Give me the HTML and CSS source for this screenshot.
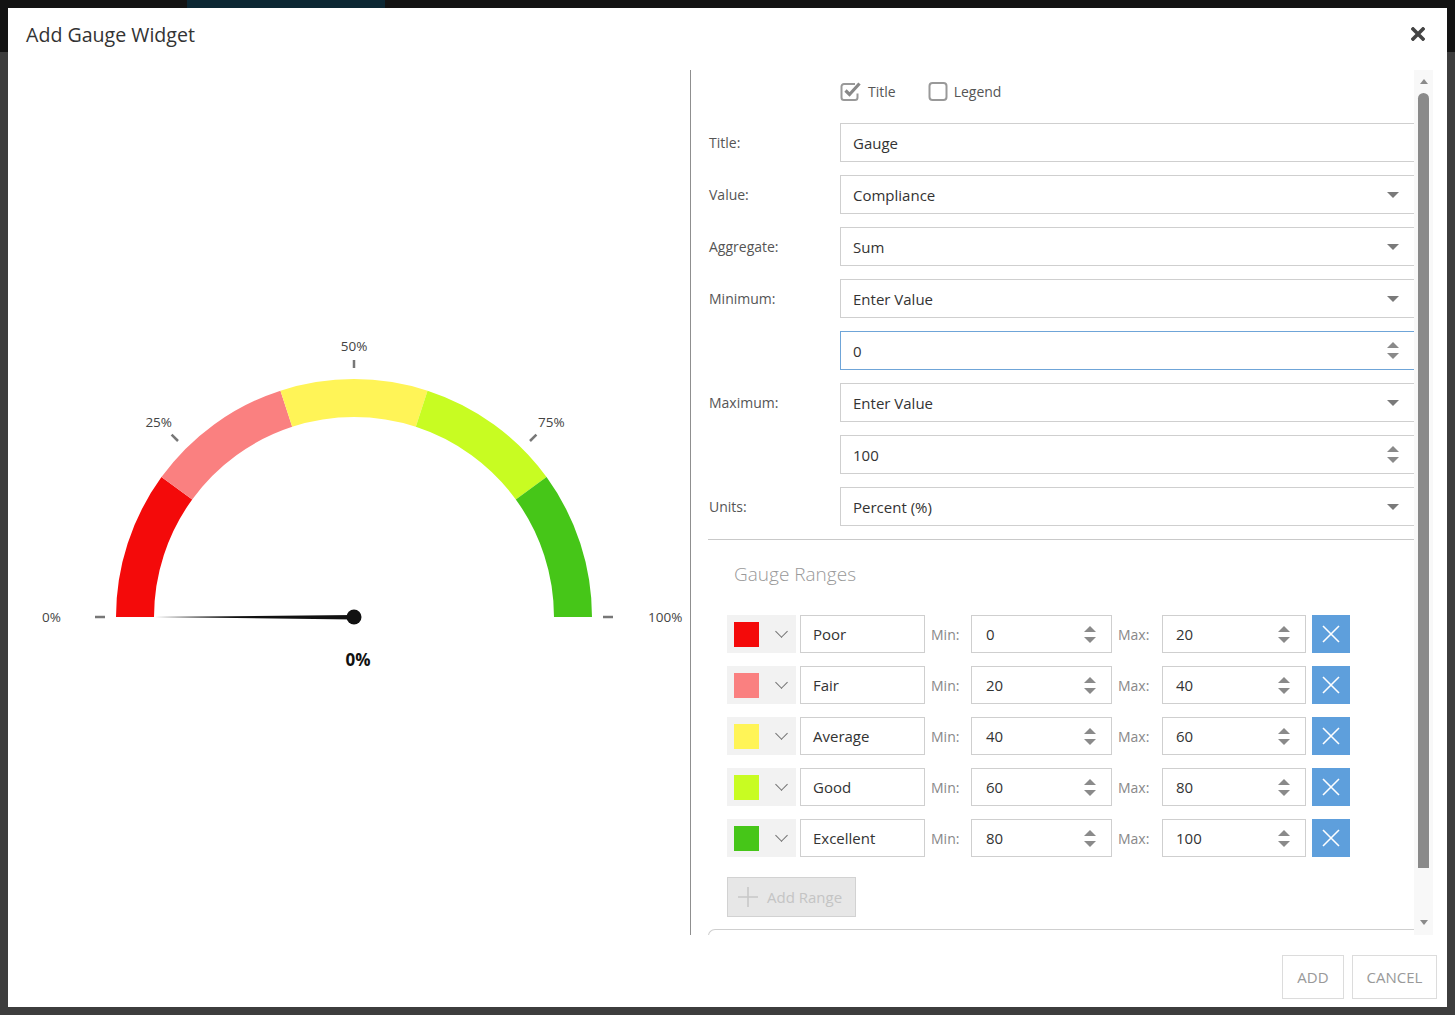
FILE: index.html
```html
<!DOCTYPE html>
<html lang="en">
<head>
  <meta charset="UTF-8" />
  <title>Add Gauge Widget</title>
  <link rel="stylesheet" href="styles.css">
</head>
<body>

  <!-- Ventana modal -->
  <div class="modal">
    <div class="modal-header">
      <h2 class="modal-title">Add Gauge Widget</h2>
      <button class="close-btn" aria-label="Close">
        <svg width="14" height="14" viewBox="0 0 14 14"><path d="M2 2 L12 12 M12 2 L2 12" stroke="#444" stroke-width="3.6" stroke-linecap="square"/></svg>
      </button>
    </div>

    <div class="modal-body">
      <!-- Vista previa del gauge -->
      <div class="preview">
        <svg class="gauge" width="682" height="865" viewBox="8 70 682 865">
          <path d="M116 617 A238 238 0 0 1 161.45 477.11 L192.2 499.44 A200 200 0 0 0 154 617 Z" fill="#f40a0a"/>
          <path d="M161.45 477.11 A238 238 0 0 1 280.45 390.64 L292.2 426.78 A200 200 0 0 0 192.2 499.44 Z" fill="#fa8080"/>
          <path d="M280.45 390.64 A238 238 0 0 1 427.55 390.64 L415.8 426.78 A200 200 0 0 0 292.2 426.78 Z" fill="#fff457"/>
          <path d="M427.55 390.64 A238 238 0 0 1 546.55 477.11 L515.8 499.44 A200 200 0 0 0 415.8 426.78 Z" fill="#c8fc22"/>
          <path d="M546.55 477.11 A238 238 0 0 1 592 617 L554 617 A200 200 0 0 0 515.8 499.44 Z" fill="#46c618"/>

          <g stroke="#777" stroke-width="2.5">
            <line x1="95" y1="617" x2="105" y2="617"/>
            <line x1="171.6" y1="434.6" x2="178" y2="441"/>
            <line x1="354" y1="360" x2="354" y2="368"/>
            <line x1="536.4" y1="434.6" x2="530" y2="441"/>
            <line x1="603" y1="617" x2="613" y2="617"/>
          </g>

          <g class="tick-label">
            <text x="61" y="622" text-anchor="end">0%</text>
            <text x="172" y="427" text-anchor="end">25%</text>
            <text x="354" y="351" text-anchor="middle">50%</text>
            <text x="538" y="427" text-anchor="start">75%</text>
            <text x="648" y="622" text-anchor="start">100%</text>
          </g>

          <polygon points="155,617 354,615 354,619.5" fill="#111"/>
          <circle cx="354" cy="617" r="7.5" fill="#111"/>
          <text class="gauge-value" x="358" y="666" text-anchor="middle">0%</text>
        </svg>
      </div>

      <!-- Configuración -->
      <div class="settings">
        <div class="settings-scroll">
          <div class="checks">
            <label class="check">
              <svg width="22" height="20" viewBox="0 0 22 20"><path d="M15 3 H4 a2.5 2.5 0 0 0 -2.5 2.5 v11 a2.5 2.5 0 0 0 2.5 2.5 h11 a2.5 2.5 0 0 0 2.5 -2.5 v-4" fill="none" stroke="#999" stroke-width="2"/><path d="M5.5 9.5 L9.5 13.5 L19.5 2.5" fill="none" stroke="#888" stroke-width="3.2"/></svg>
              Title
            </label>
            <label class="check">
              <svg width="20" height="20" viewBox="0 0 20 20"><rect x="1.5" y="2" width="17" height="17" rx="3" fill="none" stroke="#999" stroke-width="2"/></svg>
              Legend
            </label>
          </div>

          <div class="form-row">
            <span class="form-label">Title:</span>
            <div class="field">Gauge</div>
          </div>
          <div class="form-row">
            <span class="form-label">Value:</span>
            <div class="field">Compliance<span class="caret"></span></div>
          </div>
          <div class="form-row">
            <span class="form-label">Aggregate:</span>
            <div class="field">Sum<span class="caret"></span></div>
          </div>
          <div class="form-row">
            <span class="form-label">Minimum:</span>
            <div class="field">Enter Value<span class="caret"></span></div>
          </div>
          <div class="form-row">
            <span class="form-label"></span>
            <div class="field focused">0<span class="spin"><i class="up"></i><i class="down"></i></span></div>
          </div>
          <div class="form-row">
            <span class="form-label">Maximum:</span>
            <div class="field">Enter Value<span class="caret"></span></div>
          </div>
          <div class="form-row">
            <span class="form-label"></span>
            <div class="field">100<span class="spin"><i class="up"></i><i class="down"></i></span></div>
          </div>
          <div class="form-row">
            <span class="form-label">Units:</span>
            <div class="field">Percent (%)<span class="caret"></span></div>
          </div>

          <hr class="sep">
          <h3 class="ranges-title">Gauge Ranges</h3>

          <div class="range-row">
            <div class="color-pick"><span class="swatch" style="background:#f40a0a"></span><span class="chev"></span></div>
            <div class="rfield name">Poor</div>
            <span class="rlabel">Min:</span>
            <div class="rfield num-min">0<span class="spin"><i class="up"></i><i class="down"></i></span></div>
            <span class="rlabel max">Max:</span>
            <div class="rfield num-max">20<span class="spin"><i class="up"></i><i class="down"></i></span></div>
            <button class="del-btn"><svg width="18" height="18" viewBox="0 0 18 18"><path d="M1 1 L17 17 M17 1 L1 17" stroke="#fff" stroke-width="1.6"/></svg></button>
          </div>
          <div class="range-row">
            <div class="color-pick"><span class="swatch" style="background:#fa8080"></span><span class="chev"></span></div>
            <div class="rfield name">Fair</div>
            <span class="rlabel">Min:</span>
            <div class="rfield num-min">20<span class="spin"><i class="up"></i><i class="down"></i></span></div>
            <span class="rlabel max">Max:</span>
            <div class="rfield num-max">40<span class="spin"><i class="up"></i><i class="down"></i></span></div>
            <button class="del-btn"><svg width="18" height="18" viewBox="0 0 18 18"><path d="M1 1 L17 17 M17 1 L1 17" stroke="#fff" stroke-width="1.6"/></svg></button>
          </div>
          <div class="range-row">
            <div class="color-pick"><span class="swatch" style="background:#fff457"></span><span class="chev"></span></div>
            <div class="rfield name">Average</div>
            <span class="rlabel">Min:</span>
            <div class="rfield num-min">40<span class="spin"><i class="up"></i><i class="down"></i></span></div>
            <span class="rlabel max">Max:</span>
            <div class="rfield num-max">60<span class="spin"><i class="up"></i><i class="down"></i></span></div>
            <button class="del-btn"><svg width="18" height="18" viewBox="0 0 18 18"><path d="M1 1 L17 17 M17 1 L1 17" stroke="#fff" stroke-width="1.6"/></svg></button>
          </div>
          <div class="range-row">
            <div class="color-pick"><span class="swatch" style="background:#c8fc22"></span><span class="chev"></span></div>
            <div class="rfield name">Good</div>
            <span class="rlabel">Min:</span>
            <div class="rfield num-min">60<span class="spin"><i class="up"></i><i class="down"></i></span></div>
            <span class="rlabel max">Max:</span>
            <div class="rfield num-max">80<span class="spin"><i class="up"></i><i class="down"></i></span></div>
            <button class="del-btn"><svg width="18" height="18" viewBox="0 0 18 18"><path d="M1 1 L17 17 M17 1 L1 17" stroke="#fff" stroke-width="1.6"/></svg></button>
          </div>
          <div class="range-row">
            <div class="color-pick"><span class="swatch" style="background:#46c618"></span><span class="chev"></span></div>
            <div class="rfield name">Excellent</div>
            <span class="rlabel">Min:</span>
            <div class="rfield num-min">80<span class="spin"><i class="up"></i><i class="down"></i></span></div>
            <span class="rlabel max">Max:</span>
            <div class="rfield num-max">100<span class="spin"><i class="up"></i><i class="down"></i></span></div>
            <button class="del-btn"><svg width="18" height="18" viewBox="0 0 18 18"><path d="M1 1 L17 17 M17 1 L1 17" stroke="#fff" stroke-width="1.6"/></svg></button>
          </div>

          <button class="add-range" disabled>
            <svg width="22" height="22" viewBox="0 0 22 22"><path d="M11 1 V21 M1 11 H21" stroke="#c8c8c8" stroke-width="1.6"/></svg>
            Add Range
          </button>

          <div class="next-box"></div>
        </div>

        <!-- Barra de desplazamiento -->
        <div class="scrollbar">
          <span class="sb-up"></span>
          <span class="sb-thumb"></span>
          <span class="sb-down"></span>
        </div>
      </div>
    </div>

    <div class="modal-footer">
      <button class="foot-btn add">ADD</button>
      <button class="foot-btn cancel">CANCEL</button>
    </div>
  </div>

</body>
</html>
```

FILE: styles.css
```css
body {
  margin: 0;
  padding: 8px;
  background:
    linear-gradient(to right, transparent 187px, #0c2733 187px, #0c2733 385px, transparent 385px) top left / 100% 8px no-repeat,
    linear-gradient(#131313 0, #131313 52px, #3d3d3d 52px);
  font-family: "Open Sans", "Liberation Sans", sans-serif;
  color: #333;
}

.modal {
  width: 1439px;
  height: 999px;
  background: #fff;
  display: flex;
  flex-direction: column;
}

.modal-header {
  height: 52px;
  padding: 0 22px 0 18px;
  display: flex;
  align-items: center;
  justify-content: space-between;
}

.modal-title {
  margin: 0;
  font-size: 19.6px;
  font-weight: 400;
  color: #333;
}

.close-btn {
  background: none;
  border: none;
  padding: 0;
  width: 14px;
  height: 14px;
  display: flex;
  cursor: pointer;
}

.modal-body {
  margin-top: 10px;
  height: 865px;
  display: flex;
}

.preview {
  width: 683px;
  flex-shrink: 0;
  border-right: 1px solid #8f8f8f;
  box-sizing: border-box;
}

.gauge {
  display: block;
}

.tick-label text {
  font-size: 13.5px;
  fill: #444;
}

.gauge-value {
  font-size: 17px;
  font-weight: 700;
  fill: #111;
}

.settings {
  flex: 1;
  display: flex;
  padding: 0 14px 0 17px;
}

.settings-scroll {
  width: 706px;
  overflow: hidden;
  padding-top: 7px;
  box-sizing: border-box;
}

/* Casillas */
.checks {
  height: 28px;
  margin: 0 0 18px 132px;
  display: flex;
  align-items: center;
  font-size: 14px;
  color: #555;
}

.check {
  display: flex;
  align-items: center;
  gap: 6px;
  margin-right: 32px;
}

.check svg {
  display: block;
}

/* Filas del formulario */
.form-row {
  display: flex;
  align-items: center;
  margin-bottom: 13px;
}

.form-label {
  width: 132px;
  flex-shrink: 0;
  font-size: 14px;
  color: #555;
  padding-left: 1px;
  box-sizing: border-box;
}

.field {
  flex: 1;
  height: 39px;
  box-sizing: border-box;
  border: 1px solid #cfcfcf;
  border-right: none;
  padding: 0 15px 0 12px;
  display: flex;
  align-items: center;
  justify-content: space-between;
  font-size: 15px;
  color: #333;
}

.field.focused {
  border-color: #6fa5d8;
}

.caret {
  width: 0;
  height: 0;
  border-left: 6px solid transparent;
  border-right: 6px solid transparent;
  border-top: 6px solid #7a7a7a;
}

.spin {
  display: flex;
  flex-direction: column;
  gap: 5px;
}

.spin i {
  display: block;
  width: 0;
  height: 0;
  border-left: 6px solid transparent;
  border-right: 6px solid transparent;
}

.spin .up {
  border-bottom: 6px solid #8a8a8a;
}

.spin .down {
  border-top: 6px solid #8a8a8a;
}

.sep {
  margin: 0;
  border: none;
  border-top: 1px solid #c9c9c9;
}

.ranges-title {
  margin: 21px 0 28px 26px;
  font-size: 19px;
  line-height: 26px;
  font-weight: 300;
  color: #999;
}

/* Rangos */
.range-row {
  display: flex;
  align-items: center;
  height: 38px;
  margin: 0 0 13px 19px;
}

.color-pick {
  width: 69px;
  height: 38px;
  background: #f2f2f2;
  display: flex;
  align-items: center;
  padding-left: 7px;
  box-sizing: border-box;
}

.swatch {
  width: 25px;
  height: 25px;
}

.chev {
  width: 8px;
  height: 8px;
  border-right: 1.3px solid #707070;
  border-bottom: 1.3px solid #707070;
  transform: rotate(45deg);
  margin: -6px 0 0 18px;
}

.rfield {
  height: 38px;
  border: 1px solid #cfcfcf;
  box-sizing: border-box;
  display: flex;
  align-items: center;
  justify-content: space-between;
  font-size: 15px;
  color: #333;
}

.rfield.name {
  width: 125px;
  margin-left: 4px;
  padding-left: 12px;
}

.rfield.num-min {
  width: 141px;
  padding: 0 15px 0 14px;
}

.rfield.num-max {
  width: 144px;
  padding: 0 15px 0 13px;
}

.rlabel {
  width: 46px;
  padding-left: 6px;
  box-sizing: border-box;
  font-size: 14px;
  color: #888;
}

.rlabel.max {
  width: 50px;
}

.del-btn {
  width: 38px;
  height: 38px;
  margin-left: 6px;
  border: none;
  background: #5e9fdc;
  display: flex;
  align-items: center;
  justify-content: center;
  padding: 0;
  cursor: pointer;
}

.add-range {
  margin: 20px 0 0 19px;
  width: 129px;
  height: 40px;
  background: #e7e7e7;
  border: 1px solid #d2d2d2;
  display: flex;
  align-items: center;
  gap: 8px;
  padding: 0 0 0 9px;
  font-family: inherit;
  font-size: 15px;
  color: #c4c4c4;
}

.next-box {
  margin-top: 12px;
  height: 60px;
  border: 1px solid #cfcfcf;
  border-right: none;
  border-radius: 7px 0 0 0;
}

/* Barra de desplazamiento */
.scrollbar {
  width: 19px;
  background: #f8f8f8;
  display: flex;
  flex-direction: column;
  align-items: center;
}

.sb-up {
  width: 0;
  height: 0;
  border-left: 4.5px solid transparent;
  border-right: 4.5px solid transparent;
  border-bottom: 5px solid #8a8a8a;
  margin: 9px 0 9px;
}

.sb-thumb {
  width: 11px;
  height: 775px;
  background: #8a8a8a;
  border-radius: 6px 6px 0 0;
}

.sb-down {
  width: 0;
  height: 0;
  border-left: 4.5px solid transparent;
  border-right: 4.5px solid transparent;
  border-top: 5px solid #8a8a8a;
  margin: auto 0 10px;
}

.modal-footer {
  flex: 1;
  display: flex;
  justify-content: flex-end;
  align-items: flex-end;
  gap: 8px;
  padding: 0 10px 8px;
}

.foot-btn {
  height: 44px;
  padding: 0;
  background: #fff;
  border: 1px solid #dcdcdc;
  font-family: inherit;
  font-size: 15px;
  color: #999;
}

.foot-btn.add {
  width: 62px;
}

.foot-btn.cancel {
  width: 85px;
}
```
